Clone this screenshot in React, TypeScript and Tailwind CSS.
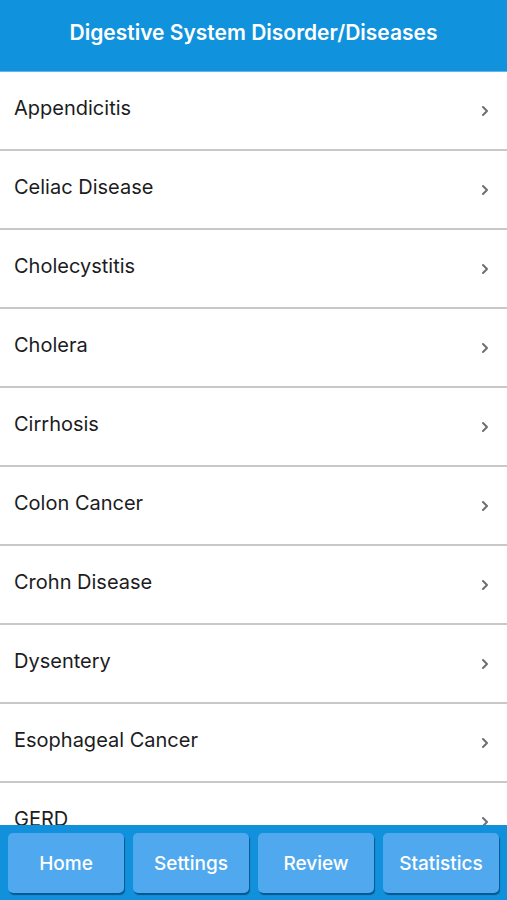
import React from 'react'

const diseases = [
  'Appendicitis',
  'Celiac Disease',
  'Cholecystitis',
  'Cholera',
  'Cirrhosis',
  'Colon Cancer',
  'Crohn Disease',
  'Dysentery',
  'Esophageal Cancer',
  'GERD',
]

const tabs = ['Home', 'Settings', 'Review', 'Statistics']

function Chevron() {
  return (
    <svg className="w-[8px] h-[12px] text-[#6e6e73]" viewBox="0 0 8 12" fill="none" stroke="currentColor">
      <path d="M2 2l4 4-4 4" strokeWidth={2} strokeLinecap="round" strokeLinejoin="round" />
    </svg>
  )
}

export default function App() {
  return (
    <div className="flex flex-col h-[900px] w-full bg-white font-['Inter','Liberation_Sans',Arial,sans-serif] overflow-hidden">
      {/* Header */}
      <div className="h-[72px] shrink-0 bg-[#1192dc] border-b border-[#5db5ea] flex items-center justify-center">
        <h1 className="text-white text-[21px] font-semibold -mt-[6px]">Digestive System Disorder/Diseases</h1>
      </div>

      {/* List */}
      <div className="flex-1 min-h-0 overflow-hidden">
        {diseases.map((name) => (
          <div
            key={name}
            className="h-[79px] flex items-center justify-between pl-[14px] pr-[18px] border-b-2 border-[#c8c8c8]"
          >
            <span className="text-[20px] text-[#1c1c1e] -mt-[6px]">{name}</span>
            <Chevron />
          </div>
        ))}
      </div>

      {/* Bottom tab bar */}
      <div className="h-[75px] shrink-0 bg-[#1190db] flex items-start gap-[9px] px-[8px] pt-[8px]">
        {tabs.map((t) => (
          <button
            key={t}
            className="flex-1 h-[60px] pt-[3px] rounded-[5px] bg-[#50a9ee] shadow-[1px_2px_1px_rgba(0,40,80,0.55)] text-white text-[19px] font-medium flex items-center justify-center"
          >
            {t}
          </button>
        ))}
      </div>
    </div>
  )
}
